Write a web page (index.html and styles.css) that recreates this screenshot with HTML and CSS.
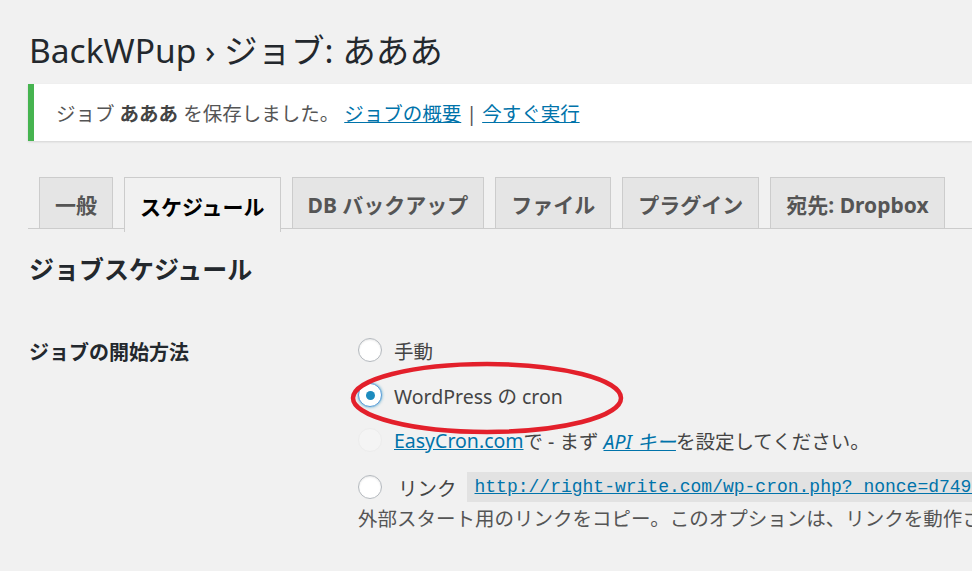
FILE: index.html
```html
<!DOCTYPE html>
<html lang="ja">
<head>
  <meta charset="UTF-8" />
  <title>BackWPup › ジョブ: あああ</title>
  <link rel="stylesheet" href="styles.css">
</head>
<body>

<div class="wrap">
  <h1 class="page-title">BackWPup › ジョブ: あああ</h1>

  <div class="notice">
    <p>ジョブ <b>あああ</b> を保存しました。 <a href="#">ジョブの概要</a> | <a href="#">今すぐ実行</a></p>
  </div>

  <nav class="nav-tabs">
    <a class="nav-tab" href="#">一般</a>
    <a class="nav-tab active" href="#">スケジュール</a>
    <a class="nav-tab" href="#">DB バックアップ</a>
    <a class="nav-tab" href="#">ファイル</a>
    <a class="nav-tab" href="#">プラグイン</a>
    <a class="nav-tab" href="#">宛先: Dropbox</a>
  </nav>

  <h2 class="section-title">ジョブスケジュール</h2>

  <div class="form-row">
    <div class="form-label">ジョブの開始方法</div>
    <div class="form-field">
      <label class="radio-row"><span class="radio"></span>手動</label>
      <label class="radio-row"><span class="radio checked"></span>WordPress の cron
        <svg class="mark" width="276" height="76" viewBox="0 0 276 76"><ellipse cx="138" cy="38" rx="134" ry="34" fill="none" stroke="#e3202b" stroke-width="4.5"/></svg>
      </label>
      <label class="radio-row"><span class="radio disabled"></span><a href="#">EasyCron.com</a>で - まず&nbsp;<a href="#"><i>API キー</i></a>を設定してください。</label>
      <label class="radio-row link-row"><span class="radio"></span><span class="link-label">リンク</span><code><a href="#">http://right-write.com/wp-cron.php?_nonce=d749d1f7b2&amp;backwpup_run=runext&amp;jobid=1</a></code></label>
      <p class="description">外部スタート用のリンクをコピー。このオプションは、リンクを動作させるために有効化する必要があります。</p>
    </div>
  </div>
</div>

</body>
</html>
```

FILE: styles.css
```css
html, body {
  margin: 0;
  background: #f1f1f1;
  overflow: hidden;
}

body {
  font-family: "Noto Sans", "Noto Sans CJK JP", sans-serif;
  font-size: 19.5px;
  color: #444;
  width: 972px;
  height: 571px;
}

a {
  color: #0073aa;
}

.wrap {
  padding: 28px 0 0 28px;
}

.page-title {
  margin: 0 0 0 1px;
  font-size: 33.5px;
  font-weight: 400;
  line-height: 44px;
  color: #23282d;
  white-space: nowrap;
}

.notice {
  margin-top: 12px;
  background: #fff;
  border-left: 6px solid #46b450;
  box-shadow: 0 1px 2px rgba(0,0,0,0.12);
  height: 57px;
  display: flex;
  align-items: center;
  padding-left: 22px;
}

.notice p {
  margin: 0;
  color: #555;
  white-space: nowrap;
}

.notice b {
  color: #444;
}

.nav-tabs {
  margin-top: 36px;
  display: flex;
  gap: 11px;
  padding-left: 11px;
  border-bottom: 1px solid #ccc;
  height: 51px;
}

.nav-tab {
  display: flex;
  align-items: center;
  padding: 2px 15px 0;
  background: #e5e5e5;
  border: 1px solid #ccc;
  border-bottom: none;
  color: #555;
  text-decoration: none;
  font-weight: 700;
  font-size: 21px;
  white-space: nowrap;
}

.nav-tab.active {
  background: #f1f1f1;
  color: #000;
  height: 52px;
}

.section-title {
  margin: 22px 0 0 1px;
  font-size: 25px;
  line-height: 36px;
  color: #23282d;
}

.form-row {
  display: grid;
  grid-template-columns: 329px auto;
  margin-top: 46px;
  margin-left: 1px;
}

.form-label {
  font-weight: 700;
  font-size: 20px;
  color: #23282d;
  line-height: 34px;
  padding-top: 3px;
}

.form-field {
  display: flex;
  flex-direction: column;
  gap: 11px;
}

.radio-row {
  display: flex;
  align-items: center;
  height: 34px;
  white-space: nowrap;
  position: relative;
}

.radio {
  width: 22px;
  height: 22px;
  border: 1px solid #b4b9be;
  border-radius: 50%;
  background: #fff;
  box-shadow: inset 0 1px 2px rgba(0,0,0,0.1);
  margin-right: 12px;
  flex: none;
  display: flex;
  align-items: center;
  justify-content: center;
}

.radio.checked {
  border-color: #5b9dd9;
  box-shadow: 0 0 3px rgba(30,140,190,0.8);
}

.radio.checked::after {
  content: "";
  width: 9px;
  height: 9px;
  border-radius: 50%;
  background: #1e8cbe;
}

.radio.disabled {
  border-color: #ececec;
  background: #f4f4f4;
  box-shadow: none;
}

.mark {
  position: absolute;
  left: -9px;
  top: -18px;
}

.link-row {
  margin-top: 2px;
}

.link-label {
  margin-left: 4px;
  margin-right: 10px;
}

code {
  background: #e2e2e2;
  padding: 3px 6px 3px 8px;
  font-family: "Liberation Mono", monospace;
  font-size: 18px;
  line-height: 24px;
}

.description {
  margin: -12px 0 0;
  color: #555;
  white-space: nowrap;
}
```
